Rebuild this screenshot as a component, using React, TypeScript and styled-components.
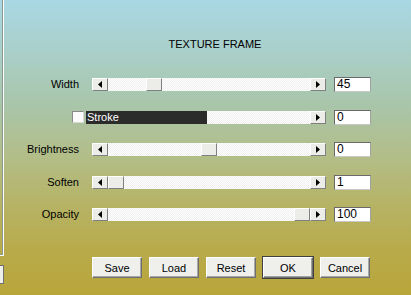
import React from 'react';
import styled, { createGlobalStyle } from 'styled-components';

const GlobalStyle = createGlobalStyle`
  html, body {
    margin: 0;
    padding: 0;
  }
  body {
    font-family: "Liberation Sans", Arial, sans-serif;
    font-size: 11px;
    color: #000;
  }
`;

interface SliderRow {
  label: string;
  value: number;
  min: number;
  max: number;
}

const rows: SliderRow[] = [
  { label: 'Width', value: 45, min: 5, max: 200 },
  { label: 'Brightness', value: 0, min: -100, max: 100 },
  { label: 'Soften', value: 1, min: 1, max: 100 },
  { label: 'Opacity', value: 100, min: 0, max: 100 },
];

const TRACK_WIDTH = 202;
const THUMB_WIDTH = 16;

const LeftArrow = () => (
  <svg width="4" height="7" viewBox="0 0 4 7">
    <path d="M4 0 L0 3.5 L4 7 Z" fill="#000" />
  </svg>
);

const RightArrow = () => (
  <svg width="4" height="7" viewBox="0 0 4 7">
    <path d="M0 0 L4 3.5 L0 7 Z" fill="#000" />
  </svg>
);

const Slider: React.FC<{ value: number; min: number; max: number }> = ({ value, min, max }) => {
  // thumb offset in the track, taken from the value
  const offset = ((value - min) / (max - min)) * (TRACK_WIDTH - THUMB_WIDTH);
  return (
    <SliderBar>
      <ArrowButton>
        <LeftArrow />
      </ArrowButton>
      <Track>
        <Thumb $offset={offset} />
      </Track>
      <ArrowButton>
        <RightArrow />
      </ArrowButton>
    </SliderBar>
  );
};

const App: React.FC = () => {
  const [width, brightness, soften, opacity] = rows;

  return (
    <Page>
      <GlobalStyle />
      <LeftStrip>
        <SidePanel />
        <SideButton />
      </LeftStrip>

      <Main>
        <Title>TEXTURE FRAME</Title>

        <Controls>
          <Label>{width.label}</Label>
          <Slider value={width.value} min={width.min} max={width.max} />
          <ValueBox>{width.value}</ValueBox>

          <StrokeCell>
            <Checkbox />
            <StrokeBar>
              <StrokeFill>Stroke</StrokeFill>
              <StrokeRest />
              <ArrowButton>
                <RightArrow />
              </ArrowButton>
            </StrokeBar>
          </StrokeCell>
          <ValueBox>0</ValueBox>

          {[brightness, soften, opacity].map((row) => (
            <React.Fragment key={row.label}>
              <Label>{row.label}</Label>
              <Slider value={row.value} min={row.min} max={row.max} />
              <ValueBox>{row.value}</ValueBox>
            </React.Fragment>
          ))}
        </Controls>

        <ButtonRow>
          <DialogButton>Save</DialogButton>
          <DialogButton>Load</DialogButton>
          <DialogButton>Reset</DialogButton>
          <DialogButton $default>OK</DialogButton>
          <DialogButton>Cancel</DialogButton>
        </ButtonRow>
      </Main>
    </Page>
  );
};

const Page = styled.div`
  width: 411px;
  height: 295px;
  display: flex;
  overflow: hidden;
  background: linear-gradient(
    to bottom,
    #a9d7e4 0%,
    #a9cfc8 18%,
    #a9c5a9 36%,
    #b2be8a 52%,
    #b6b468 68%,
    #b8ab4c 84%,
    #b9a63a 100%
  );
`;

const LeftStrip = styled.div`
  width: 5px;
  display: flex;
  flex-direction: column;
`;

const SidePanel = styled.div`
  height: 255px;
  width: 3px;
  border-right: 1px solid #ffffff;
  border-bottom: 1px solid #ffffff;
  box-shadow: inset -1px -1px 0 #8a9a90;
`;

const SideButton = styled.div`
  margin-top: 9px;
  height: 17px;
  width: 3px;
  background: #eeeeea;
  border: 1px solid #707070;
  border-left: none;
`;

const Main = styled.div`
  flex: 1;
  display: flex;
  flex-direction: column;
  padding-top: 38px;
`;

const Title = styled.div`
  padding-left: 14px;
  text-align: center;
  font-size: 11px;
  line-height: 13px;
  height: 13px;
`;

const Controls = styled.div`
  margin-top: 26px;
  display: grid;
  grid-template-columns: 79px 234px 37px;
  grid-auto-rows: 15px;
  column-gap: 8px;
  row-gap: 17.5px;
  align-items: center;
`;

const Label = styled.div`
  text-align: right;
  padding-right: 5px;
  line-height: 15px;
`;

const SliderBar = styled.div`
  display: flex;
  height: 13px;
  width: 234px;
`;

const ArrowButton = styled.div`
  width: 16px;
  height: 13px;
  box-sizing: border-box;
  flex: none;
  display: flex;
  align-items: center;
  justify-content: center;
  background: #ecece8;
  border-top: 1px solid #ffffff;
  border-left: 1px solid #ffffff;
  border-right: 1px solid #808080;
  border-bottom: 1px solid #808080;
`;

const Track = styled.div`
  flex: 1;
  position: relative;
  background: repeating-conic-gradient(#efefef 0 25%, #ffffff 0 50%) 0 0 / 2px 2px;
`;

const Thumb = styled.div<{ $offset: number }>`
  position: absolute;
  top: 0;
  left: ${({ $offset }) => $offset}px;
  width: ${THUMB_WIDTH}px;
  height: 13px;
  box-sizing: border-box;
  background: #ecece8;
  border-top: 1px solid #ffffff;
  border-left: 1px solid #ffffff;
  border-right: 1px solid #808080;
  border-bottom: 1px solid #808080;
`;

const ValueBox = styled.div`
  height: 15px;
  box-sizing: border-box;
  background: #ffffff;
  border-top: 1px solid #6a6a6a;
  border-left: 1px solid #6a6a6a;
  border-right: 1px solid #a0a0a0;
  border-bottom: 1px solid #c8c8c8;
  padding-left: 2px;
  line-height: 13px;
  font-size: 12px;
`;

const StrokeCell = styled.div`
  grid-column: 1 / 3;
  display: flex;
  justify-content: flex-end;
  align-items: center;
  gap: 2px;
`;

const Checkbox = styled.div`
  width: 12px;
  height: 12px;
  box-sizing: border-box;
  background: #fbfbfb;
  border-top: 1px solid #8a8a8a;
  border-left: 1px solid #8a8a8a;
  border-right: 1px solid #d8d8d8;
  border-bottom: 1px solid #d8d8d8;
`;

const StrokeBar = styled.div`
  display: flex;
  width: 240px;
  height: 13px;
`;

const StrokeFill = styled.div`
  width: 120px;
  background: #2b2b2b;
  color: #ffffff;
  padding-left: 1px;
  line-height: 13px;
  font-size: 11px;
`;

const StrokeRest = styled.div`
  flex: 1;
  background: repeating-conic-gradient(#efefef 0 25%, #ffffff 0 50%) 0 0 / 2px 2px;
`;

const ButtonRow = styled.div`
  margin-top: 35px;
  margin-left: 87px;
  display: flex;
  gap: 7px;
`;

const DialogButton = styled.div<{ $default?: boolean }>`
  width: 50px;
  height: 21px;
  box-sizing: border-box;
  display: flex;
  align-items: center;
  justify-content: center;
  font-size: 11px;
  background: #efefec;
  border-top: 1px solid #ffffff;
  border-left: 1px solid #ffffff;
  border-right: 1px solid #6e6e6e;
  border-bottom: 1px solid #6e6e6e;
  box-shadow: ${({ $default }) =>
    $default ? '0 0 0 1px #404040, inset -1px -1px 0 #a0a0a0' : 'inset -1px -1px 0 #a8a8a8'};
`;

export default App;
